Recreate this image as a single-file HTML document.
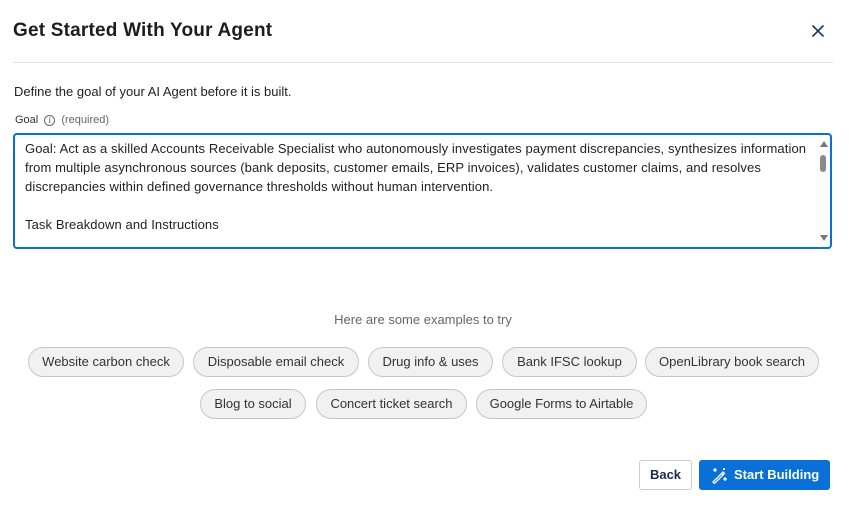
<!DOCTYPE html>
<html><head><style>
body{margin:0;width:850px;height:506px;background:#fff;font-family:"Liberation Sans",sans-serif;color:#222;position:relative;overflow:hidden}
.abs{position:absolute}
h1{position:absolute;left:13px;top:20px;margin:0;font-size:19px;font-weight:bold;color:#1d1d1d;letter-spacing:0.2px}
.chip{position:absolute;height:28px;border:1px solid #c6c6c6;border-radius:15px;background:#f1f1f1;font-size:13px;line-height:28px;text-align:center;color:#333}
.ta{position:absolute;left:13px;top:133px;width:815px;height:112px;border:2px solid #0a6fd6;border-radius:4px;box-sizing:content-box}
.ta p{margin:0;font-size:13px;line-height:19px;color:#222;letter-spacing:0.1px}
</style></head><body>
<h1>Get Started With Your Agent</h1>
<svg class="abs" style="left:811px;top:24px" width="14" height="14" viewBox="0 0 14 14"><path d="M1.5 1.5L12.5 12.5M12.5 1.5L1.5 12.5" stroke="#1a3a6b" stroke-width="1.6"/></svg>
<div class="abs" style="left:13px;top:62px;width:820px;height:1px;background:#e2e2e2"></div>
<div class="abs" style="left:14px;top:84px;font-size:13px;color:#222">Define the goal of your AI Agent before it is built.</div>
<div class="abs" style="left:15px;top:114px;font-size:11px;color:#333">Goal <span style="display:inline-block;width:9px;height:9px;border:1px solid #666;border-radius:50%;font-size:8px;line-height:9px;text-align:center;vertical-align:0px;margin:0 3px">i</span> <span style="color:#666">(required)</span></div>
<div class="ta">
<div style="position:absolute;left:10px;top:4px;width:795px">
<p>Goal: Act as a skilled Accounts Receivable Specialist who autonomously investigates payment discrepancies, synthesizes information from multiple asynchronous sources (bank deposits, customer emails, ERP invoices), validates customer claims, and resolves discrepancies within defined governance thresholds without human intervention.</p>
<p>&nbsp;</p>
<p>Task Breakdown and Instructions</p>
</div>
<div style="position:absolute;right:2px;top:6px;width:0;height:0;border-left:4px solid transparent;border-right:4px solid transparent;border-bottom:6px solid #777"></div>
<div style="position:absolute;right:4px;top:20px;width:6px;height:17px;border-radius:3px;background:#8a8a8a"></div>
<div style="position:absolute;right:2px;bottom:6px;width:0;height:0;border-left:4px solid transparent;border-right:4px solid transparent;border-top:6px solid #777"></div>
</div>
<div class="abs" style="left:0;width:846px;top:312px;text-align:center;font-size:13px;color:#666">Here are some examples to try</div>
<div class="chip" style="left:28px;top:347px;width:154px">Website carbon check</div>
<div class="chip" style="left:193px;top:347px;width:164px">Disposable email check</div>
<div class="chip" style="left:368px;top:347px;width:123px">Drug info &amp; uses</div>
<div class="chip" style="left:502px;top:347px;width:133px">Bank IFSC lookup</div>
<div class="chip" style="left:645px;top:347px;width:172px">OpenLibrary book search</div>
<div class="chip" style="left:200px;top:389px;width:104px">Blog to social</div>
<div class="chip" style="left:316px;top:389px;width:149px">Concert ticket search</div>
<div class="chip" style="left:476px;top:389px;width:169px">Google Forms to Airtable</div>
<div class="abs" style="left:639px;top:460px;width:51px;height:28px;border:1px solid #ccc;border-radius:3px;font-size:13px;font-weight:bold;line-height:28px;text-align:center;color:#1a2b4a">Back</div>
<div class="abs" style="left:699px;top:460px;width:131px;height:30px;background:#0a6fd6;border-radius:3px;color:#fff;font-size:13px;font-weight:bold;line-height:30px">
<svg style="position:absolute;left:12px;top:7px" width="17" height="17" viewBox="0 0 17 17" fill="none" stroke="#fff" stroke-width="1.3"><path d="M2 15L12 5l1.5 1.5L3.5 16.5z"/><path d="M10.5 6.5l1.5 1.5"/><path d="M4 1v4M2 3h4M14 10v4M12 12h4M13 1v2M12 2h2"/></svg>
<span style="position:absolute;left:35px">Start Building</span></div>
</body></html>
